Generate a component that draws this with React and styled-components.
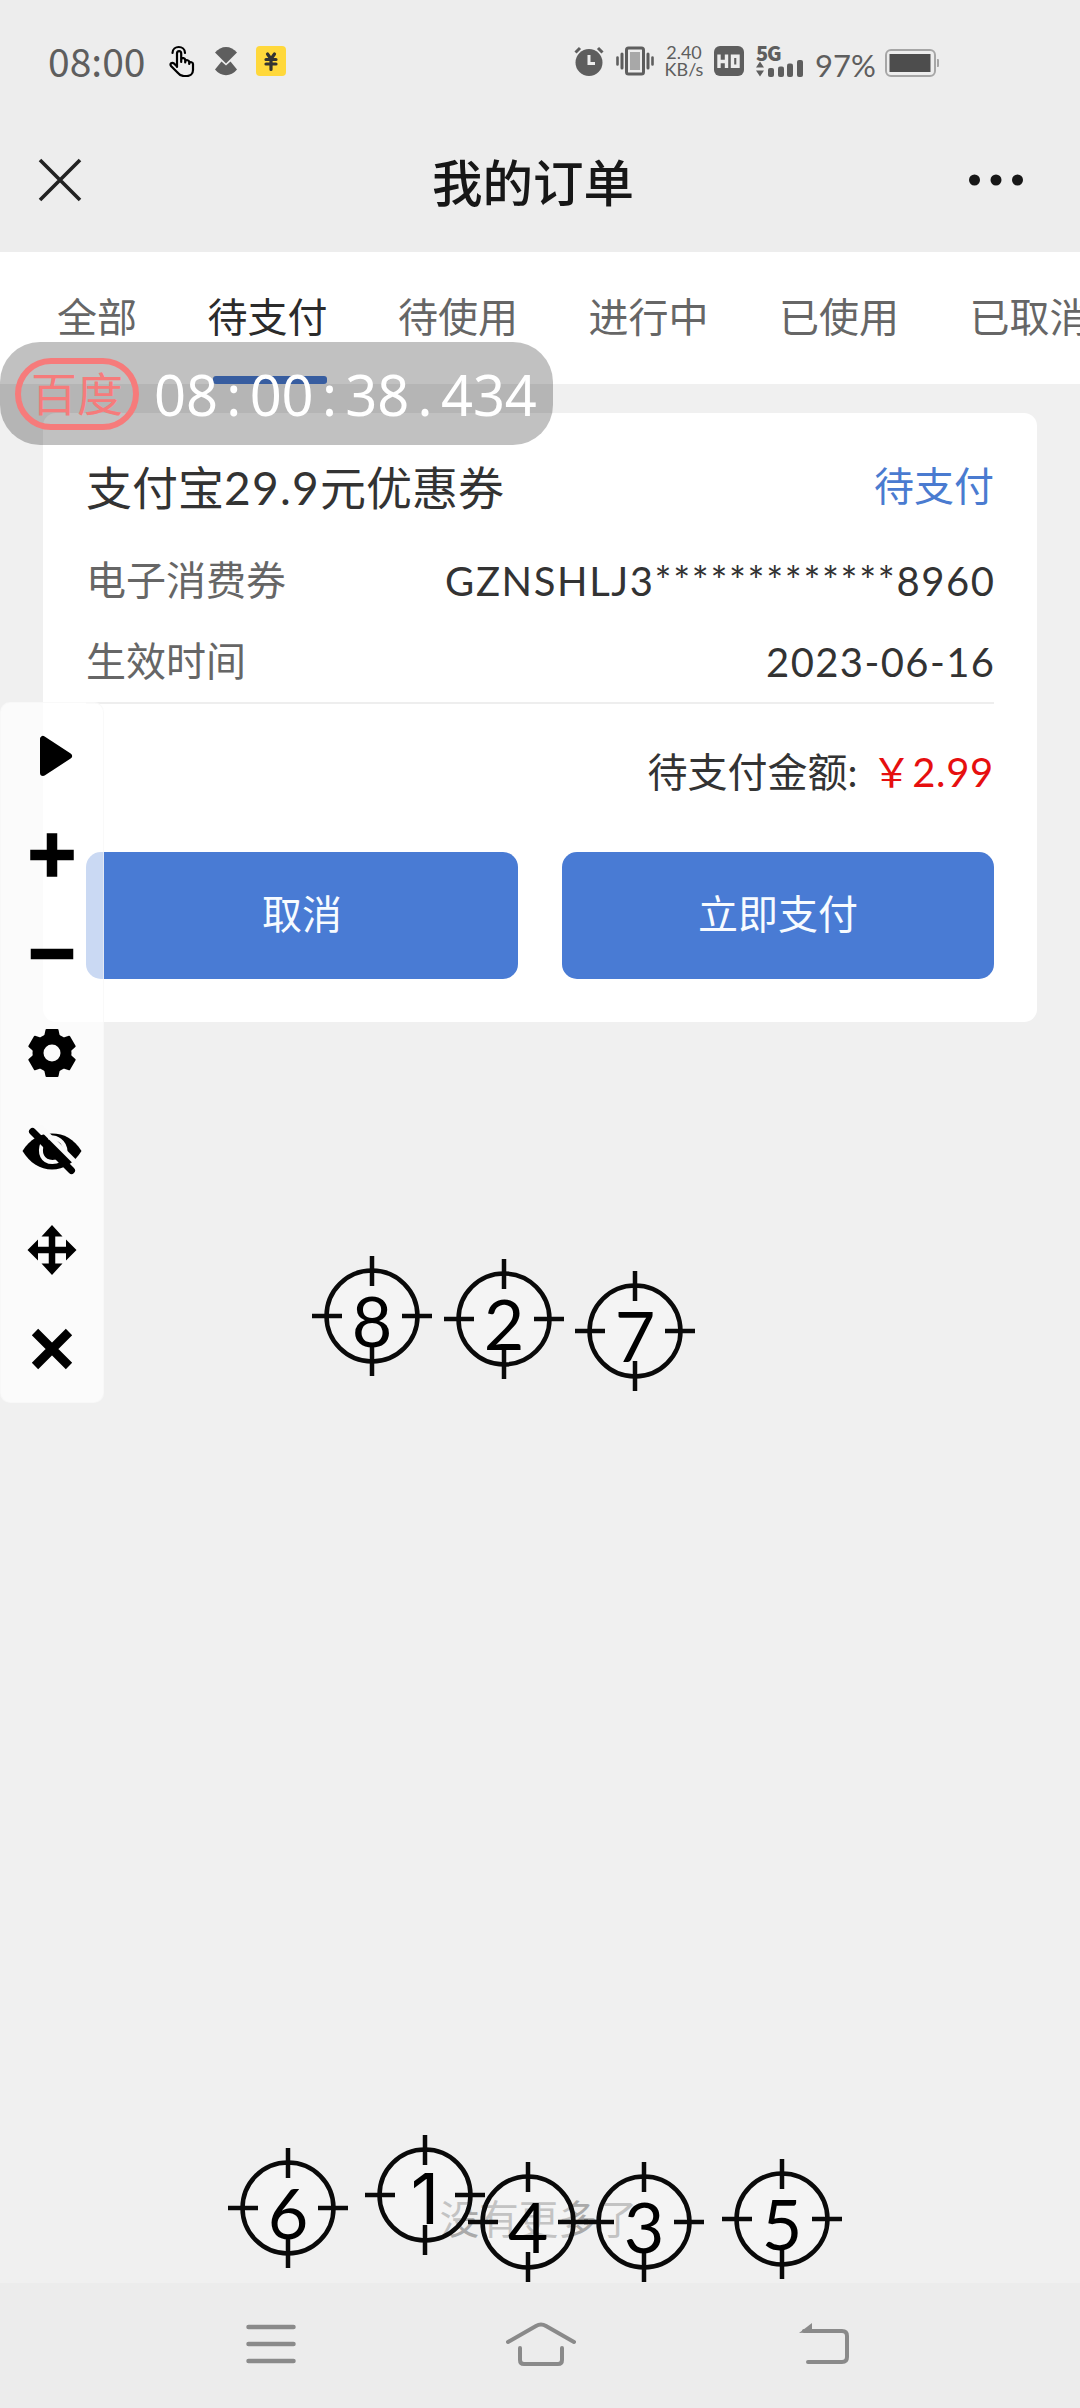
import React from 'react';
import styled, { createGlobalStyle } from 'styled-components';

const GlobalStyle = createGlobalStyle`
  * {
    box-sizing: border-box;
  }
  body {
    margin: 0;
    background: #f0f0f0;
    font-family: Lato, 'Noto Sans CJK SC', sans-serif;
  }
  svg {
    display: block;
    flex: none;
  }
`;

const Screen = styled.div`
  position: relative;
  display: flex;
  flex-direction: column;
  width: 1080px;
  height: 2408px;
  overflow: hidden;
  background: #f0f0f0;
`;

/* ---------- status bar ---------- */

const StatusBar = styled.div`
  display: flex;
  align-items: center;
  justify-content: space-between;
  height: 122px;
  padding: 0 141px 0 48px;
  background: #ededed;
  color: #5e5e5e;
`;
const StatusGroup = styled.div`
  display: flex;
  align-items: center;
`;
const Clock = styled.div`
  width: 121px;
  margin-top: -3px;
  font-family: 'Noto Sans CJK SC', sans-serif;
  font-size: 39px;
  line-height: 38px;
`;
const Speed = styled.div`
  display: flex;
  flex-direction: column;
  align-items: center;
  width: 38px;
  margin: 0 11px 0 11px;
  font-size: 18px;
  line-height: 17px;
`;
const Percent = styled.div`
  width: 60px;
  margin: 7px 10px 0 11px;
  font-size: 31px;
  line-height: 30px;
`;

/* ---------- header ---------- */

const Header = styled.header`
  display: flex;
  align-items: center;
  justify-content: space-between;
  height: 130px;
  padding: 0 56px 14px 38px;
  background: #ededed;
`;
const Title = styled.h1`
  margin: 5px 0 0 16px;
  font-size: 50.5px;
  line-height: 60px;
  font-weight: 500;
  color: #171717;
`;

/* ---------- tabs ---------- */

const Tabs = styled.nav`
  display: flex;
  flex: none;
  gap: 70.5px;
  height: 132px;
  padding-left: 57px;
  overflow: hidden;
  background: #fff;
`;
const Tab = styled.div`
  display: flex;
  flex: none;
  flex-direction: column;
  align-items: center;
  justify-content: space-between;
  padding-top: 35px;
  font-size: 40px;
  line-height: 60px;
  color: ${props => (props.$active ? '#2b2b2b' : '#666')};
`;
const Underline = styled.div`
  width: 114px;
  height: 8px;
  margin-left: 4px;
  border-radius: 3px;
  background: #497bd4;
`;

/* ---------- order card ---------- */

const Content = styled.main`
  display: flex;
  flex: 1;
  flex-direction: column;
  justify-content: space-between;
  padding: 29px 43px 34px;
`;
const Card = styled.section`
  display: flex;
  flex-direction: column;
  height: 609px;
  padding: 46px 43px 43px 43px;
  border-radius: 13px;
  background: #fff;
`;
const CardHead = styled.div`
  display: flex;
  align-items: center;
  justify-content: space-between;
  height: 60px;
  margin-bottom: 21px;
`;
const CardTitle = styled.div`
  margin-top: -8px;
  font-size: 46px;
  color: #333;
`;
const Figure = styled.span`
  letter-spacing: 1.3px;
`;
const State = styled.div`
  margin-top: -11px;
  font-size: 40px;
  color: #4a7bd0;
`;
const Row = styled.div`
  display: flex;
  align-items: center;
  justify-content: space-between;
  height: 81px;
  font-size: 40px;
  color: #333;
`;
const Label = styled.span`
  margin-top: -5px;
  color: #666;
`;
const Value = styled.span`
  margin-right: -${props => props.$spacing}px;
  letter-spacing: ${props => props.$spacing}px;
`;
const Total = styled.div`
  display: flex;
  align-items: center;
  justify-content: flex-end;
  height: 150px;
  padding-bottom: 17px;
  border-top: 2px solid #eee;
  font-size: 40px;
  color: #333;
`;
const Price = styled.span`
  margin-left: 14px;
  letter-spacing: 0.7px;
  color: #e60f0f;
`;
const Actions = styled.div`
  display: flex;
  gap: 44px;
`;
const Button = styled.button`
  flex: 1;
  height: 127px;
  padding: 0 0 7px;
  border: 0;
  border-radius: 15px;
  background: #497bd4;
  font: inherit;
  font-size: 40px;
  color: #f7fbff;
`;
const NoMore = styled.div`
  margin-right: 3px;
  font-size: 39.5px;
  line-height: 60px;
  text-align: center;
  color: #aaa;
`;

/* ---------- system navigation ---------- */

const NavBar = styled.footer`
  display: flex;
  flex: none;
  align-items: center;
  justify-content: space-between;
  height: 125px;
  padding: 0 231px 3px 246px;
  background: #ececec;
`;

/* ---------- floating pieces ---------- */

const TimerPill = styled.div`
  position: absolute;
  top: 342px;
  left: 0;
  display: flex;
  align-items: center;
  width: 553px;
  height: 103px;
  padding: 0 0 0 15px;
  border-radius: 40px;
  background: rgba(0, 0, 0, 0.245);
`;
const Source = styled.div`
  display: flex;
  align-items: center;
  justify-content: center;
  width: 124px;
  height: 72px;
  margin-right: 15px;
  border: 6px solid #f67b7b;
  border-radius: 36px;
  font-size: 46px;
  line-height: 60px;
  color: #f67b7b;
`;
const Digit = styled.span`
  width: 31.9px;
  font-family: 'Noto Sans', sans-serif;
  font-size: 56px;
  line-height: 60px;
  text-align: center;
  color: #fff;
`;

const Toolbar = styled.div`
  position: absolute;
  top: 702px;
  left: 0;
  display: flex;
  flex-direction: column;
  width: 104px;
  height: 701px;
  padding: 4px 0;
  border: 1px solid rgba(245, 245, 245, 0.6);
  border-radius: 10px;
  background: rgba(255, 255, 255, 0.71);
`;
const Tool = styled.div`
  display: flex;
  flex: 1;
  align-items: center;
  justify-content: center;
`;

const Target = styled.div`
  position: absolute;
  left: ${props => props.$x - 60}px;
  top: ${props => props.$y - 60}px;
  display: grid;
  place-items: center;
  width: 120px;
  height: 120px;

  > * {
    grid-area: 1 / 1;
  }
`;
const TargetNumber = styled.span`
  margin-top: 8px;
  font-family: ${props => (props.$plain ? 'Inter' : 'Lato')}, sans-serif;
  font-size: 70px;
  line-height: 80px;
  color: #000;
`;

const TABS = ['全部', '待支付', '待使用', '进行中', '已使用', '已取消'];

const TARGETS = [
  { n: 8, x: 372, y: 1316 },
  { n: 2, x: 504, y: 1319 },
  { n: 7, x: 635, y: 1331 },
  { n: 6, x: 288, y: 2208 },
  { n: 1, x: 425, y: 2195 },
  { n: 4, x: 528, y: 2222 },
  { n: 3, x: 644, y: 2222 },
  { n: 5, x: 782, y: 2219 },
];

/* every tool icon is drawn in a 60x60 box */
const TOOLS = [
  <path d="M21 13v34l26-17z" strokeWidth="6" />,
  <path d="M30 13.5v33M13.5 30h33" fill="none" strokeWidth="10.5" strokeLinecap="square" />,
  <path d="M14 30h32" fill="none" strokeWidth="10.5" strokeLinecap="square" />,
  <g>
    <circle cx="30" cy="30" r="14" fill="none" strokeWidth="11" />
    {[0, 60, 120, 180, 240, 300].map(angle => (
      <path key={angle} d="M24.500 7h11l1.500 7h-14z" strokeWidth="2" transform={`rotate(${angle} 30 30)`} />
    ))}
  </g>,
  <g stroke="none">
    <path d="M.5 30C8 18 18 12.500 30 12.500S52 18 59.500 30C52 42 42 48.500 30 48.500S8 42 .5 30z" />
    <path d="M20.500 22c-4 10 0 19 10 19 3 0 5-.6 7-2" fill="none" stroke="#fafafa" strokeWidth="4" />
    <path d="M26 16.500c9-1 17 4 17.500 14" fill="none" stroke="#fafafa" strokeWidth="4" />
    <path d="M17 5l38 38" stroke="#fafafa" strokeWidth="5" />
    <path d="M10.500 10.500l39 39" stroke="#000" strokeWidth="7" strokeLinecap="round" />
  </g>,
  <g stroke="none">
    <path d="M30 5l10.500 11.500h-21zM30 55l10.500-11.500h-21zM5.500 30l10.500-10.500v21zM54.500 30l-10.500-10.500v21z" />
    <path d="M30 12v36M12 30h36" stroke="#000" strokeWidth="6.500" />
  </g>,
  <path d="M13 13l34 34M47 13l-34 34" fill="none" strokeWidth="9" />,
];

const HandIcon = () => (
  <svg width="26" height="32" viewBox="0 0 26 32" fill="none" stroke="#000" strokeWidth="2.2" strokeLinejoin="round" strokeLinecap="round">
    <path d="M8 22V8.500c0-3.300 4.200-3.300 4.200 0V17v-3c1-1.500 4-1.200 4 1v2.500V16c1-1.300 4-1 4 1v2-1c1-1.300 3.800-1 3.800 1v6c0 4-3 6-6 6h-3c-3 0-5-1.500-7-4L2 21c-1.500-2.500 1-4 3-2.500l3 3" />
    <path d="M3.500 8c0-8 12.500-8 12.500 0" />
  </svg>
);

const HourglassIcon = () => (
  <svg width="24" height="30" viewBox="0 0 24 30" fill="#5e5e5e">
    <path d="M1 6.500C7-1 17-1 23 6.500L12 17.500z" />
    <path d="M1 23.500L7.500 15.500 12 19.500 16.500 15.500 23 23.500C17 31 7 31 1 23.500z" />
  </svg>
);

const YenIcon = () => (
  <svg width="30" height="30" viewBox="0 0 30 30">
    <rect width="30" height="30" rx="4" fill="#ffd83b" />
    <path d="M11.500 8l3.500 5 3.500-5M15 13v10.500M10 13.500h10M10 18h10" fill="none" stroke="#333" strokeWidth="3.2" strokeLinecap="round" />
  </svg>
);

const AlarmIcon = () => (
  <svg width="30" height="30" viewBox="0 0 30 30" fill="none" stroke="#5e5e5e">
    <circle cx="15" cy="16.5" r="13.5" fill="#5e5e5e" stroke="none" />
    <path d="M1.500 6.500L6 2M28.500 6.500L24 2" strokeWidth="3" />
    <path d="M15 9v8.500h6" stroke="#ededed" strokeWidth="3" />
  </svg>
);

const VibrateIcon = () => (
  <svg width="38" height="30" viewBox="0 0 38 30" fill="none" stroke="#5e5e5e">
    <rect x="10.5" y="2" width="17" height="26" rx="2" strokeWidth="3" />
    <rect x="14" y="6" width="10" height="18" fill="#a8a8a8" stroke="none" />
    <path d="M6 8v14M32 8v14" strokeWidth="3" strokeLinecap="round" />
    <path d="M1.500 11.500v7M36.500 11.500v7" strokeWidth="2.6" strokeLinecap="round" />
  </svg>
);

const HdIcon = () => (
  <svg width="30" height="30" viewBox="0 0 30 30">
    <rect width="30" height="30" rx="6" fill="#5e5e5e" />
    <path d="M5 8.500v13.500M12.500 8.500v13.500M5 15.500h7.500M18.500 10.200h5.500v10h-5.500z" fill="none" stroke="#ededed" strokeWidth="3.4" />
  </svg>
);

const SignalWrap = styled.div`
  display: flex;
  flex-direction: column;
  width: 48px;
  height: 31px;
  margin-left: 12px;
  font-family: 'Noto Sans CJK SC', sans-serif;
  font-size: 20px;
  line-height: 14px;
  font-weight: 900;
  letter-spacing: -1.3px;
`;

const Signal = () => (
  <SignalWrap>
    5G
    <svg width="48" height="17" viewBox="0 0 48 17" fill="#5e5e5e">
      <path d="M0 7.500l4-6 4 6zM0 10.500h8l-4 6z" />
      <rect x="12" y="8" width="6" height="9" rx="2" />
      <rect x="22" y="6.5" width="6" height="10.5" rx="2" />
      <rect x="31" y="3.5" width="6" height="13.5" rx="2" />
      <rect x="41" y="0" width="6" height="17" rx="2" />
    </svg>
  </SignalWrap>
);

const BatteryIcon = () => (
  <svg width="54" height="28" viewBox="0 0 54 28">
    <rect x="1" y="1" width="49" height="26" rx="5" fill="none" stroke="#a6a6a6" strokeWidth="2" />
    <rect x="4.5" y="5" width="41" height="18" fill="#4d4d4d" />
    <path d="M52 10h1q1 0 1 1v6q0 1-1 1h-1z" fill="#a6a6a6" />
  </svg>
);

const BatterySlot = styled.div`
  margin-top: 3px;
`;

const Crosshair = () => (
  <svg width="120" height="120" viewBox="0 0 120 120" stroke="#0a0a0a" strokeWidth="4.5">
    <circle cx="60" cy="60" r="45.5" fill="rgba(255,255,255,.3)" />
    <path d="M60 0v30M60 90v30M0 60h30M90 60h30" />
  </svg>
);

const Gap = styled.div`
  width: ${props => props.$w}px;
`;

const HomeSlot = styled.div`
  margin-right: 13px;
`;

const App = () => (
  <Screen>
    <GlobalStyle />
    <StatusBar>
      <StatusGroup>
        <Clock>08:00</Clock>
        <HandIcon />
        <Gap $w={19} />
        <HourglassIcon />
        <Gap $w={18} />
        <YenIcon />
      </StatusGroup>
      <StatusGroup>
        <AlarmIcon />
        <Gap $w={12} />
        <VibrateIcon />
        <Speed>
          <span>2.40</span>
          <span>KB/s</span>
        </Speed>
        <HdIcon />
        <Signal />
        <Percent>97%</Percent>
        <BatterySlot>
          <BatteryIcon />
        </BatterySlot>
      </StatusGroup>
    </StatusBar>

    <Header>
      <svg width="44" height="44" viewBox="0 0 44 44" stroke="#222" strokeWidth="3.6">
        <path d="M2 2l40 40M42 2L2 42" />
      </svg>
      <Title>我的订单</Title>
      <svg width="56" height="12" viewBox="0 0 56 12" fill="#171717">
        <circle cx="6.5" cy="6" r="5.5" />
        <circle cx="28" cy="6" r="5.5" />
        <circle cx="49.5" cy="6" r="5.5" />
      </svg>
    </Header>

    <Tabs>
      {TABS.map(name => (
        <Tab key={name} $active={name === '待支付'}>
          {name}
          {name === '待支付' && <Underline />}
        </Tab>
      ))}
    </Tabs>

    <Content>
      <Card>
        <CardHead>
          <CardTitle>
            支付宝<Figure>29.9</Figure>元优惠券
          </CardTitle>
          <State>待支付</State>
        </CardHead>
        <Row>
          <Label>电子消费券</Label>
          <Value $spacing={1.6}>GZNSHLJ3*************8960</Value>
        </Row>
        <Row>
          <Label>生效时间</Label>
          <Value $spacing={1.4}>2023-06-16</Value>
        </Row>
        <Total>
          待支付金额:
          <Price>￥2.99</Price>
        </Total>
        <Actions>
          <Button>取消</Button>
          <Button>立即支付</Button>
        </Actions>
      </Card>
      <NoMore>没有更多了</NoMore>
    </Content>

    <NavBar>
      <svg width="50" height="40" viewBox="0 0 50 40" stroke="#8a8a8a" strokeWidth="4.5" strokeLinecap="round">
        <path d="M2.500 3h45M2.500 20h45M2.500 37h45" />
      </svg>
      <HomeSlot>
        <svg width="70" height="44" viewBox="0 0 70 44" fill="none" stroke="#8a8a8a" strokeWidth="4" strokeLinecap="round">
          <path d="M2 20L30 4q5-3 10 0l28 16" />
          <path d="M14 26v12q0 4 4 4h34q4 0 4-4V26" />
        </svg>
      </HomeSlot>
      <svg width="51" height="44" viewBox="0 0 51 44" fill="none" stroke="#8a8a8a" strokeWidth="4" strokeLinecap="round">
        <path d="M6 9h38q5 0 5 5v21q0 5-5 5H10" />
        <path d="M1 11L14 1v9z" fill="#8a8a8a" stroke="none" />
      </svg>
    </NavBar>

    <TimerPill>
      <Source>百度</Source>
      {'08:00:38.434'.split('').map((char, i) => (
        <Digit key={i}>{char}</Digit>
      ))}
    </TimerPill>

    <Toolbar>
      {TOOLS.map((icon, i) => (
        <Tool key={i}>
          <svg width="60" height="60" viewBox="0 0 60 60" stroke="#000" strokeLinejoin="round">
            {icon}
          </svg>
        </Tool>
      ))}
    </Toolbar>

    {TARGETS.map(({ n, x, y }) => (
      <Target key={n} $x={x} $y={y}>
        <Crosshair />
        <TargetNumber $plain={n === 1}>{n}</TargetNumber>
      </Target>
    ))}
  </Screen>
);

export default App;
